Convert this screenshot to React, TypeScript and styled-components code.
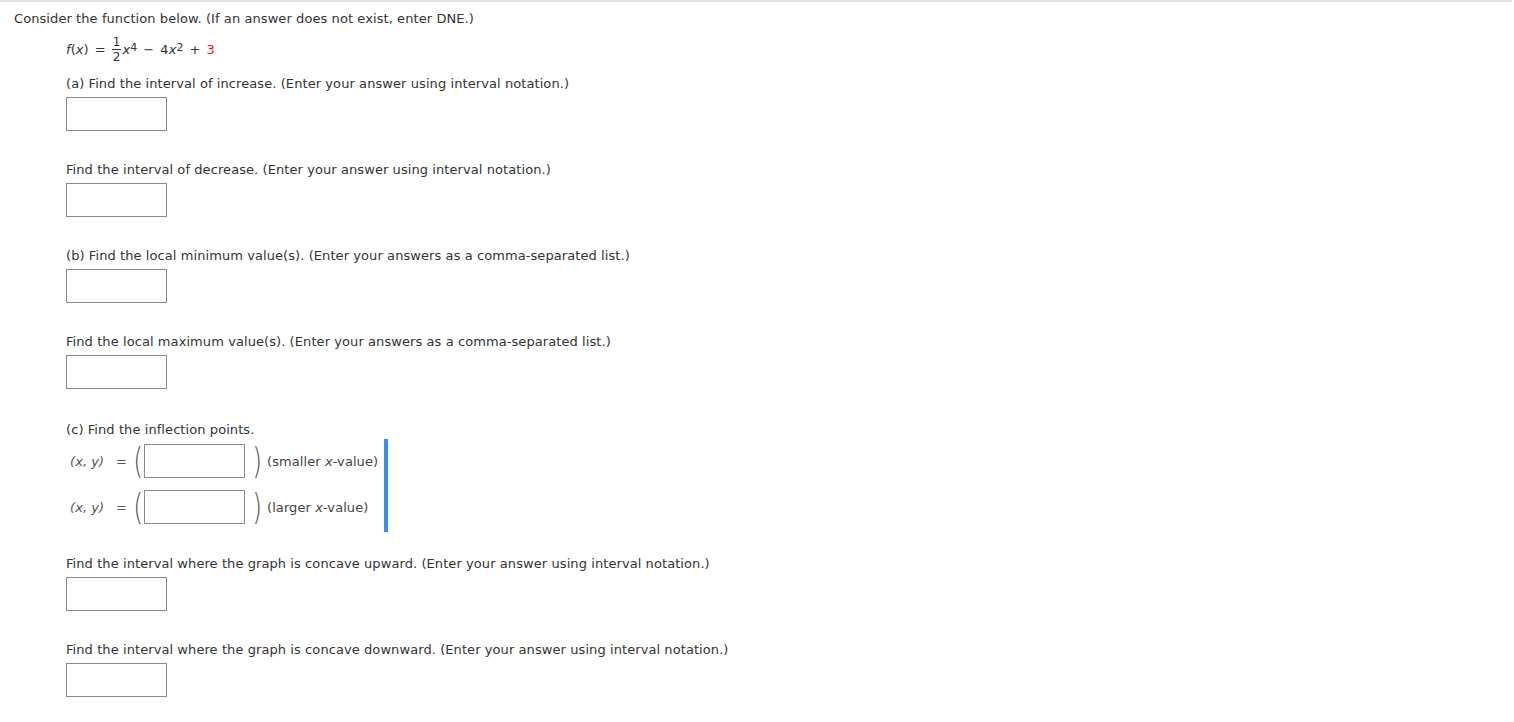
import React from 'react';
import styled, { createGlobalStyle } from 'styled-components';

const GlobalStyle = createGlobalStyle`
  html, body {
    margin: 0;
    padding: 0;
    background: #fff;
  }
  body {
    font-family: 'DejaVu Sans', Verdana, sans-serif;
    font-size: 13px;
    letter-spacing: 0.08px;
    color: #333;
  }
`;

const Page = styled.div`
  border-top: 2px solid #e2e2e2;
  margin-right: 2px;
  padding: 9px 0 24px 14px;
`;

const Intro = styled.div`
  line-height: 16px;
`;

const Body = styled.div`
  padding-left: 52px;
`;

const Formula = styled.div`
  display: flex;
  align-items: center;
  height: 32px;
  margin-top: 6px;
  font-size: 13px;
`;

const Italic = styled.span`
  font-style: italic;
`;

const Op = styled.span`
  margin: 0 6px;
`;

const Frac = styled.span`
  display: inline-flex;
  flex-direction: column;
  align-items: center;
  font-size: 12px;
  line-height: 12px;
  margin: 0 1px 0 0;
`;

const FracTop = styled.span`
  border-bottom: 1px solid #333;
  padding: 0 1px 1px;
`;

const FracBottom = styled.span`
  padding-top: 1px;
`;

const Sup = styled.sup`
  font-size: 11px;
  line-height: 0;
  position: relative;
  top: -1px;
`;

const Red = styled.span`
  color: #e8141a;
`;

const Part = styled.div<{ $gap?: number }>`
  margin-top: ${(p) => p.$gap ?? 31}px;
`;

const Prompt = styled.div`
  line-height: 16px;
`;

const AnswerBox = styled.div`
  width: 99px;
  height: 32px;
  border: 1px solid #8a8a8a;
  margin-top: 5px;
  background: #fff;
`;

const PointGroup = styled.div`
  display: inline-flex;
  flex-direction: column;
  gap: 12px;
  margin-top: 1px;
  padding: 5px 6px 8px 0;
  border-right: 4px solid #3a8ef0;
`;

const PointRow = styled.div`
  display: flex;
  align-items: center;
  height: 34px;
`;

const PointLabel = styled.span`
  width: 46px;
  padding-left: 4px;
  font-style: italic;
  color: #555;
`;

const Equals = styled.span`
  width: 16px;
  color: #555;
`;

const Paren = styled.span`
  display: inline-block;
  width: 9px;
  text-align: center;
  font-size: 36px;
  font-weight: 200;
  line-height: 34px;
  color: #555;
  transform: scaleX(0.7);
`;

const PointBox = styled(AnswerBox)`
  margin: 0 0 0 3px;
`;

const Hint = styled.span`
  margin-left: 7px;
  color: #444;
`;

const CloseParen = styled(Paren)`
  margin-left: 6px;
`;

const prompts = [
  'Find the interval of decrease. (Enter your answer using interval notation.)',
  '(b) Find the local minimum value(s). (Enter your answers as a comma-separated list.)',
  'Find the local maximum value(s). (Enter your answers as a comma-separated list.)',
];

export default function App() {
  return (
    <>
      <GlobalStyle />
      <Page>
        <Intro>Consider the function below. (If an answer does not exist, enter DNE.)</Intro>
        <Body>
          <Formula>
            <Italic>f</Italic>(<Italic>x</Italic>)<Op>=</Op>
            <Frac>
              <FracTop>1</FracTop>
              <FracBottom>2</FracBottom>
            </Frac>
            <Italic>x</Italic>
            <Sup>4</Sup>
            <Op>−</Op>4<Italic>x</Italic>
            <Sup>2</Sup>
            <Op>+</Op>
            <Red>3</Red>
          </Formula>

          <Part $gap={11}>
            <Prompt>(a) Find the interval of increase. (Enter your answer using interval notation.)</Prompt>
            <AnswerBox />
          </Part>

          {prompts.map((text) => (
            <Part key={text}>
              <Prompt>{text}</Prompt>
              <AnswerBox />
            </Part>
          ))}

          <Part $gap={33}>
            <Prompt>(c) Find the inflection points.</Prompt>
            <PointGroup>
              {['smaller', 'larger'].map((size) => (
                <PointRow key={size}>
                  <PointLabel>(x, y)</PointLabel>
                  <Equals>=</Equals>
                  <Paren>(</Paren>
                  <PointBox />
                  <CloseParen>)</CloseParen>
                  <Hint>
                    ({size} <Italic>x</Italic>-value)
                  </Hint>
                </PointRow>
              ))}
            </PointGroup>
          </Part>

          <Part $gap={24}>
            <Prompt>Find the interval where the graph is concave upward. (Enter your answer using interval notation.)</Prompt>
            <AnswerBox />
          </Part>

          <Part>
            <Prompt>Find the interval where the graph is concave downward. (Enter your answer using interval notation.)</Prompt>
            <AnswerBox />
          </Part>
        </Body>
      </Page>
    </>
  );
}
